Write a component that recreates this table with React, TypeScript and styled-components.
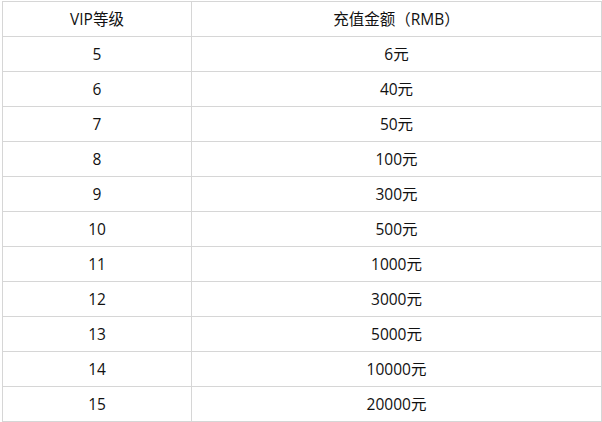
import React from "react";
import styled, { createGlobalStyle } from "styled-components";

interface VipRow {
  level: number;
  amount: string;
}

const rows: VipRow[] = [
  { level: 5, amount: "6元" },
  { level: 6, amount: "40元" },
  { level: 7, amount: "50元" },
  { level: 8, amount: "100元" },
  { level: 9, amount: "300元" },
  { level: 10, amount: "500元" },
  { level: 11, amount: "1000元" },
  { level: 12, amount: "3000元" },
  { level: 13, amount: "5000元" },
  { level: 14, amount: "10000元" },
  { level: 15, amount: "20000元" },
];

const GlobalStyle = createGlobalStyle`
  html, body {
    margin: 0;
    padding: 0;
    background: #ffffff;
  }
`;

const Page = styled.div`
  padding: 1px 0 0 2px;
`;

const Table = styled.table`
  width: 600px;
  border-collapse: collapse;
  table-layout: fixed;
  font-family: "Open Sans", "Noto Sans CJK SC", sans-serif;
  font-size: 15.5px;
  color: #111111;
`;

const Cell = styled.td<{ $first?: boolean }>`
  width: ${({ $first }) => ($first ? "188px" : "auto")};
  height: 34px;
  padding: 0;
  border: 1px solid #d6d6d6;
  text-align: center;
  vertical-align: middle;
  line-height: 20px;
`;

function App() {
  return (
    <Page>
      <GlobalStyle />
      <Table>
        <tbody>
          <tr>
            <Cell $first>VIP等级</Cell>
            <Cell>充值金额（RMB）</Cell>
          </tr>
          {rows.map(({ level, amount }) => (
            <tr key={level}>
              <Cell $first>{level}</Cell>
              <Cell>{amount}</Cell>
            </tr>
          ))}
        </tbody>
      </Table>
    </Page>
  );
}

export default App;
